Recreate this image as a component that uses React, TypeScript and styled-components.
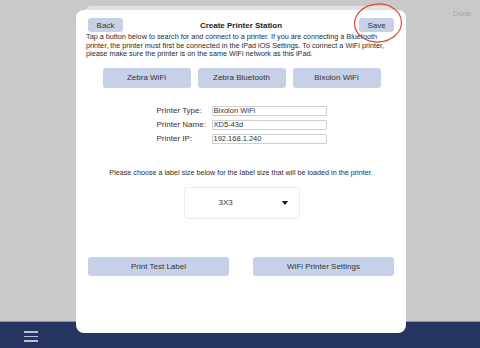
import React from "react";
import styled, { createGlobalStyle } from "styled-components";

const Global = createGlobalStyle`
  html, body { margin: 0; padding: 0; }
  body { font-family: "Liberation Sans", Arial, sans-serif; -webkit-font-smoothing: antialiased; }
  #root { width: 480px; height: 348px; }
`;

const Page = styled.div`
  position: relative;
  width: 480px;
  height: 348px;
  display: flex;
  flex-direction: column;
  background: #c9c9c9;
  overflow: hidden;
`;

const TopArea = styled.div`
  flex: 1;
  display: flex;
  justify-content: flex-end;
  align-items: flex-start;
  padding: 9px 9px 0 0;
  border-bottom: 1px solid #8f939c;
`;

const DoneText = styled.span`
  font-size: 7.5px;
  color: #a4a4a4;
`;

const BottomBar = styled.div`
  height: 26px;
  background: #25355f;
  display: flex;
  align-items: center;
  padding-left: 24px;
`;

const Hamburger = styled.div`
  width: 14px;
  display: flex;
  flex-direction: column;
  gap: 3px;
  margin-top: 3px;
  & > span {
    display: block;
    height: 1.5px;
    background: #b9bfd6;
  }
`;

const BackSheet = styled.div`
  position: absolute;
  left: 85px;
  top: 6px;
  width: 311px;
  height: 40px;
  background: #e2e2e2;
  border-radius: 6px 6px 0 0;
`;

const Modal = styled.div`
  position: absolute;
  left: 76px;
  top: 10px;
  width: 330px;
  height: 323px;
  box-sizing: border-box;
  background: #ffffff;
  border-radius: 8px;
  padding: 8px 12px 0 12px;
  display: flex;
  flex-direction: column;
  color: #2b2b2b;
`;

const Header = styled.div`
  display: flex;
  align-items: center;
  justify-content: space-between;
  height: 14px;
`;

const Title = styled.div`
  font-size: 8px;
  font-weight: bold;
  color: #222;
`;

const Button = styled.button<{ $w?: number; $h?: number }>`
  width: ${(p) => p.$w ?? 88}px;
  height: ${(p) => p.$h ?? 20}px;
  border: none;
  border-radius: 3px;
  background: #c6d1e8;
  color: #333;
  font-family: "Liberation Sans", Arial, sans-serif;
  font-size: 8px;
  padding: 0;
  display: flex;
  align-items: center;
  justify-content: center;
`;

const Intro = styled.p`
  margin: 1px -4px 0 -2px;
  font-size: 7.25px;
  line-height: 8.5px;
  white-space: nowrap;
  color: #2b2b2b;
`;

const ButtonRow = styled.div`
  display: flex;
  justify-content: center;
  gap: 7px;
  margin-top: 9px;
  padding-left: 1px;
`;

const Form = styled.div`
  display: grid;
  grid-template-columns: 55px 115px;
  row-gap: 4px;
  justify-content: center;
  margin-top: 18px;
  padding-left: 1px;
`;

const Label = styled.div`
  font-size: 8px;
  line-height: 10px;
  color: #333;
`;

const Field = styled.div`
  height: 10px;
  box-sizing: border-box;
  border: 1px solid #cfcfcf;
  border-radius: 1px;
  font-size: 7.5px;
  line-height: 8px;
  padding-left: 1px;
  color: #333;
`;

const Hint = styled.div`
  margin-top: 24px;
  text-align: center;
  font-size: 7.2px;
  line-height: 9px;
  white-space: nowrap;
  color: #2b2b2b;
`;

const Select = styled.div`
  align-self: center;
  margin-top: 10px;
  margin-left: 1px;
  width: 116px;
  height: 32px;
  box-sizing: border-box;
  border: 1px solid #ececec;
  border-radius: 3px;
  display: flex;
  align-items: center;
  padding: 0 11px 0 34px;
  justify-content: space-between;
`;

const SelectText = styled.span`
  font-size: 8px;
  color: #333;
`;

const Caret = styled.span`
  width: 0;
  height: 0;
  border-left: 3.5px solid transparent;
  border-right: 3.5px solid transparent;
  border-top: 4px solid #111;
`;

const BottomRow = styled.div`
  display: flex;
  justify-content: space-between;
  margin-top: 38px;
`;

const Circle = styled.svg`
  position: absolute;
  left: 352px;
  top: 2px;
`;

export default function App() {
  return (
    <>
      <Global />
      <Page>
        <TopArea>
          <DoneText>Done</DoneText>
        </TopArea>
        <BottomBar>
          <Hamburger>
            <span />
            <span />
            <span />
          </Hamburger>
        </BottomBar>
        <BackSheet />
        <Modal>
          <Header>
            <Button $w={35} $h={14}>Back</Button>
            <Title>Create Printer Station</Title>
            <Button $w={35} $h={14}>Save</Button>
          </Header>
          <Intro>
            Tap a button below to search for and connect to a printer. If you are connecting a Bluetooth
            <br />
            printer, the printer must first be connected in the iPad iOS Settings. To connect a WiFi printer,
            <br />
            please make sure the printer is on the same WiFi network as this iPad.
          </Intro>
          <ButtonRow>
            <Button>Zebra WiFi</Button>
            <Button>Zebra Bluetooth</Button>
            <Button>Bixolon WiFi</Button>
          </ButtonRow>
          <Form>
            <Label>Printer Type:</Label>
            <Field>Bixolon WiFi</Field>
            <Label>Printer Name:</Label>
            <Field>XD5-43d</Field>
            <Label>Printer IP:</Label>
            <Field>192.168.1.240</Field>
          </Form>
          <Hint>
            Please choose a label size below for the label size that will be loaded in the printer.
          </Hint>
          <Select>
            <SelectText>3X3</SelectText>
            <Caret />
          </Select>
          <BottomRow>
            <Button $w={141} $h={19}>Print Test Label</Button>
            <Button $w={141} $h={19}>WiFi Printer Settings</Button>
          </BottomRow>
        </Modal>
        <Circle width="52" height="42" viewBox="0 0 52 42">
          <ellipse cx="26" cy="21" rx="23.5" ry="19" fill="none" stroke="#e04a37" strokeWidth="1.2" transform="rotate(-4 26 21)" />
        </Circle>
      </Page>
    </>
  );
}
